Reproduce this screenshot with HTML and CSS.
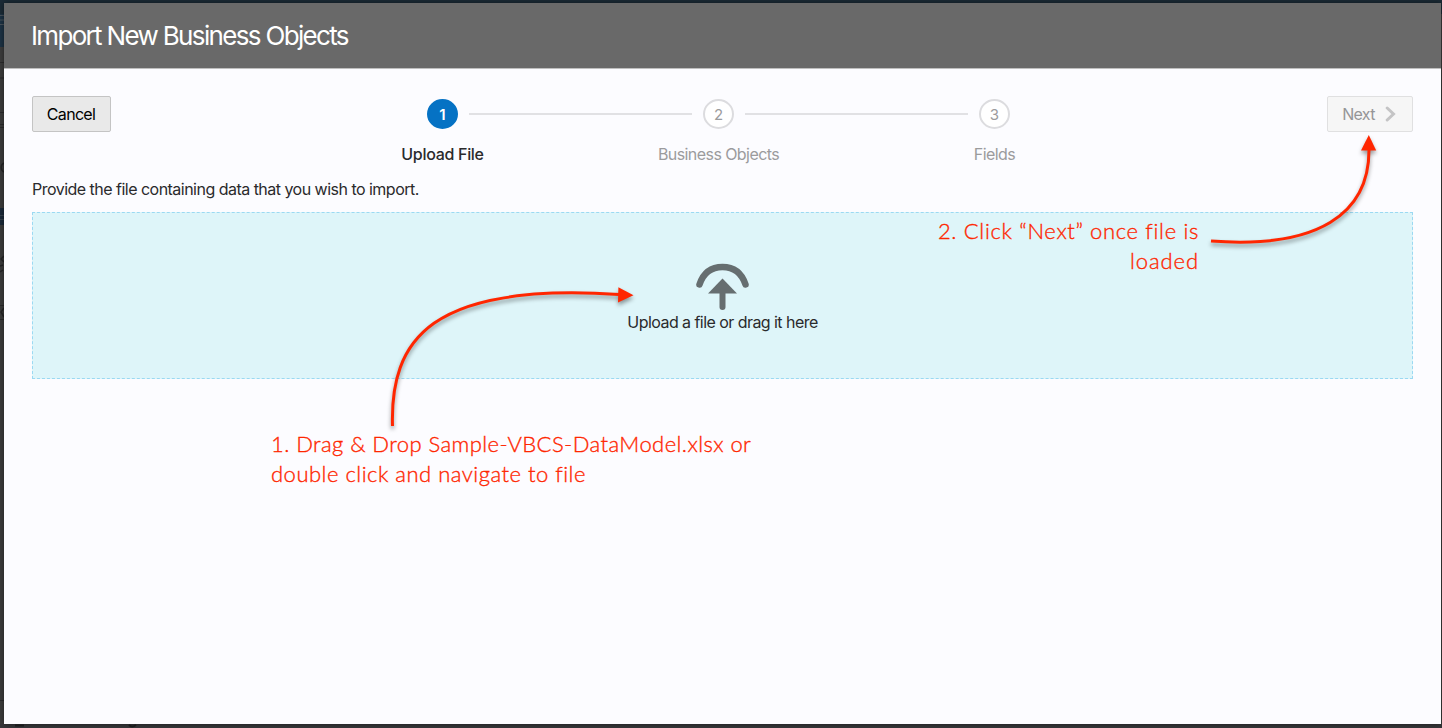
FILE: index.html
```html
<!DOCTYPE html>
<html lang="en">
<head>
<meta charset="utf-8">
<title>Import New Business Objects</title>
<link rel="stylesheet" href="styles.css">
</head>
<body>
<div class="page">
  <svg class="backdrop" width="1442" height="728" viewBox="0 0 1442 728" aria-hidden="true">
    <rect width="1442" height="728" fill="#3d3d3d"/>
    <rect y="724" width="1442" height="4" fill="#37373a"/>
    <rect width="1442" height="14" fill="#1b2b36"/>
    <rect y="14" width="4" height="33" fill="#1d3345"/>
    <path d="M0 15.500h4M0 20h4M0 24.500h4" stroke="#48525a"/>
    <path d="M0 62.500h4M0 78h4M0 112.500h4M0 124.500h4M0 127.500h4M0 305.500h4M0 319.500h4M0 700.500h4" stroke="#2b2b2c"/>
    <path d="M4 163a5 5 0 0 0 0 9M4 256l-3 3 3 3M0 266l3-1M0 272l3-2M4 308l-3 4 3 5" stroke="#252526" fill="none" stroke-width="1.500"/>
    <rect y="208" width="4" height="17" fill="#1b2a3a"/>
    <path d="M0 215.500h4M0 219.500h4" stroke="#36424d"/>
    <path d="M15 725.500h9M129 725q3 3 7 0" stroke="#1f1f20" stroke-width="2" fill="none"/>
  </svg>
  <main class="dialog">
    <header class="dialog-header"><h1 class="dialog-title">Import New Business Objects</h1></header>
    <div class="dialog-body">
      <div class="toolbar">
        <button class="button cancel">Cancel</button>
        <ol class="train">
          <li class="step current"><span class="dot">1</span><span class="label">Upload File</span></li>
          <li class="step"><span class="dot">2</span><span class="label">Business Objects</span></li>
          <li class="step"><span class="dot">3</span><span class="label">Fields</span></li>
        </ol>
        <button class="button next" disabled><span>Next</span>
          <svg width="12" height="16" viewBox="0 0 12 16"><path d="M2.200 2l6.300 6-6.300 6" fill="none" stroke="#c4c4c5" stroke-width="3" stroke-linecap="round" stroke-linejoin="miter"/></svg>
        </button>
      </div>
      <p class="hint">Provide the file containing data that you wish to import.</p>
      <div class="dropzone">
        <svg class="upload-icon" width="54" height="48" viewBox="0 0 54 48">
          <path d="M3.500 21.500C7.500 9.500 15.500 4 26.500 4s19 5.500 23 17.500" fill="none" stroke="#666e70" stroke-width="6.500" stroke-linecap="round"/>
          <path d="M26.500 15.500L41 30.500h-29z" fill="#666e70"/>
          <path d="M26.500 28v16" stroke="#666e70" stroke-width="6" stroke-linecap="round"/>
        </svg>
        <span class="drop-label">Upload a file or drag it here</span>
      </div>
    </div>
  </main>
  <svg class="arrows" width="1442" height="728" viewBox="0 0 1442 728" aria-hidden="true">
    <path d="M392.500 426C390 340 430 282 619 294.500" fill="none" stroke="#ff2600" stroke-width="3"/>
    <path d="M633.500 295.200L618.400 287.200 618 302.400z" fill="#ff2600"/>
    <path d="M1211 241C1318 249 1369 214 1369 150" fill="none" stroke="#ff2600" stroke-width="3"/>
    <path d="M1368.800 135L1361 150.500h15.200z" fill="#ff2600"/>
  </svg>
  <p class="note note-drop"><span class="line-a">1. Drag &amp; Drop Sample-VBCS-DataModel.xlsx or</span><br><span class="line-b">double click and navigate to file</span></p>
  <p class="note note-next"><span class="line-c">2. Click “Next” once file is</span><br><span class="line-d">loaded</span></p>
</div>
</body>
</html>
```
FILE: styles.css
```css
* { box-sizing: border-box; }
body { margin: 0; font-family: Inter, sans-serif; font-size: 16px; color: #2a2a2c; }
.page { position: relative; width: 1442px; height: 728px; overflow: hidden; padding: 3px 1px 4px 4px; }
.backdrop, .arrows { position: absolute; left: 0; top: 0; }
.arrows { filter: drop-shadow(0 3px 2px rgba(0, 0, 0, .4)); }
.dialog { position: relative; height: 721px; background: #fcfcff; box-shadow: 0 0 6px rgba(0, 0, 0, .5); }
.dialog-header { height: 66px; background: #696969; border-bottom: 1px solid #bfbfbf; padding: 0 27px; display: flex; align-items: center; }
.dialog-title { margin: 0; font-size: 26px; font-weight: 400; letter-spacing: -1.670px; color: #fff; white-space: nowrap; }
.dialog-body { padding: 27px 28px 0; }
.toolbar { display: flex; justify-content: space-between; align-items: flex-start; height: 82px; }
.button { height: 36px; border: 1px solid #c4c4c4; border-radius: 2px; background: #e9e9e9; color: #000; font: 400 16px Inter, sans-serif; padding: 0 1px 0 0; display: flex; align-items: center; justify-content: center; letter-spacing: -.700px; }
.cancel { width: 79px; }
.next { width: 86px; gap: 10px; background: #f6f6f6; border-color: #e0e0e1; color: #959597; }
.train { display: flex; list-style: none; margin: 3px 0 0 -1px; padding: 0; }
.step { position: relative; width: 276px; display: flex; flex-direction: column; align-items: center; color: #9b9b9d; }
.step + .step::before { content: ""; position: absolute; left: -112px; top: 14px; width: 223px; height: 2px; background: #e1e1e4; }
.dot { width: 31px; height: 30px; border: 2px solid #dcdcdf; border-radius: 50%; background: #fff; font-size: 15px; display: flex; align-items: center; justify-content: center; padding-top: 1px; }
.label { margin-top: 15px; line-height: 20px; letter-spacing: -.570px; white-space: nowrap; }
.current { color: #2a2a2c; font-weight: 500; }
.current .label { letter-spacing: -.3px; }
.current .dot { background: #0572c4; border-color: #0572c4; color: #fff; font-weight: 600; }
.hint { margin: 0; height: 34px; line-height: 22px; letter-spacing: -.520px; white-space: nowrap; }
.dropzone { height: 167px; border: 1px dashed #9bd9f2; background: #def5f9; display: flex; flex-direction: column; align-items: center; padding-top: 50px; }
.upload-icon { display: block; }
.drop-label { line-height: 20px; margin-top: 1px; letter-spacing: -.550px; white-space: nowrap; }
.note { position: absolute; margin: 0; font: 300 22px/30px Lato, sans-serif; color: #ff2600; -webkit-text-stroke: .35px #ff2600; white-space: nowrap; }
.note-drop { left: 271px; top: 429px; }
.note-next { right: 243px; top: 216px; text-align: right; }
.line-a { letter-spacing: .430px; }
.line-b { letter-spacing: .5px; }
.line-c { letter-spacing: .670px; }
.line-d { letter-spacing: .9px; }
```
